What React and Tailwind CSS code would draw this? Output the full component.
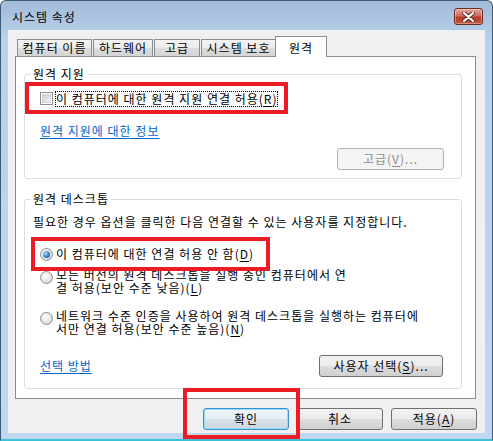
import React from 'react';

function Key({ children }) {
  return <span className="underline underline-offset-2">{children}</span>;
}

function Button({ children, width, disabled = false, focused = false }) {
  let tone =
    'border-[#707070] bg-[linear-gradient(to_bottom,#f2f2f2_0%,#ebebeb_48%,#dddddd_52%,#cfcfcf_100%)] text-black';
  if (disabled) tone = 'border-[#adb2b5] bg-[#f4f4f4] text-[#8d8d8d]';
  if (focused)
    tone =
      'border-[#3c8fd0] bg-[linear-gradient(to_bottom,#f1f6f9_0%,#e6eef3_48%,#d8e2e8_52%,#cdd7dd_100%)] text-black shadow-[inset_0_0_0_1px_#8fdcf6]';
  return (
    <button
      className={`flex h-[22px] items-center justify-center rounded-[3px] border text-[12px] leading-none ${tone}`}
      style={{ width }}
    >
      {children}
    </button>
  );
}

function Radio({ checked = false, offset = 'mt-[1px]' }) {
  return (
    <span
      className={`flex h-[13px] w-[13px] shrink-0 items-center justify-center rounded-full border border-[#8e8f8f] bg-[radial-gradient(circle_at_40%_35%,#ffffff,#dcdcdc_70%,#c6c6c6)] ${offset}`}
    >
      {checked && (
        <span className="h-[7px] w-[7px] rounded-full bg-[radial-gradient(circle_at_35%_35%,#9fdcff,#2a7cc0_60%,#1a4f8a)]" />
      )}
    </span>
  );
}

function Tab({ label, width, selected = false, first = false }) {
  if (selected) {
    return (
      <div
        className="relative z-10 -mb-[1px] -ml-[1px] flex h-[21px] items-start justify-center border border-b-0 border-[#898c95] bg-white pt-[2px] text-[12px]"
        style={{ width }}
      >
        {label}
      </div>
    );
  }
  return (
    <div
      className={`flex h-[17px] items-center justify-center border border-b-0 border-[#898c95] bg-[linear-gradient(to_bottom,#f3f3f3,#ebebeb_50%,#dddddd_51%,#d4d4d4)] text-[12px] ${first ? 'ml-[2px]' : 'ml-[1px]'}`}
      style={{ width }}
    >
      {label}
    </div>
  );
}

function GroupBox({ title, className, children }) {
  return (
    <div className={`relative ml-[8px] w-[438px] rounded-[3px] border border-[#d5dfe5] ${className}`}>
      <span className="absolute -top-[8px] left-[6px] bg-white px-[2px] text-[12px] leading-[14px]">
        {title}
      </span>
      {children}
    </div>
  );
}

export default function App() {
  return (
    <div className="relative flex h-[441px] w-[493px] flex-col overflow-hidden rounded-t-[6px] border border-b-2 border-[#3d5a78] border-b-[#3ac2d9] bg-[linear-gradient(to_bottom,#a2bcd9,#b9d2eb_40px,#bfd7ef)] font-['Noto_Sans_CJK_KR','Noto_Sans',sans-serif] tracking-[1px] text-black">
      {/* title bar */}
      <div className="flex h-[29px] shrink-0 items-center justify-between pl-[11px] pr-[9px] pt-[2px]">
        <span className="text-[12px]">시스템 속성</span>
        <div className="flex h-[17px] w-[29px] items-center justify-center rounded-[3px] border border-[#6d2d25] bg-[linear-gradient(to_bottom,#e2a79b,#cf6d5c_45%,#b83a28_55%,#c9553f)] shadow-[inset_0_0_0_1px_rgba(255,255,255,0.35)]">
          <svg width="13" height="10" viewBox="0 0 13 10">
            <path d="M2 1 L11 9 M11 1 L2 9" stroke="#5a2a24" strokeWidth="4" strokeLinecap="round" />
            <path d="M2 1 L11 9 M11 1 L2 9" stroke="#ffffff" strokeWidth="2.2" strokeLinecap="round" />
          </svg>
        </div>
      </div>

      {/* client area */}
      <div className="ml-[7px] flex h-[403px] w-[477px] flex-col bg-[#f0f0f0] pl-[7px] pt-[6px]">
        <div className="flex h-[20px] items-end">
          <Tab label="컴퓨터 이름" width={75} first />
          <Tab label="하드웨어" width={60} />
          <Tab label="고급" width={46} />
          <Tab label="시스템 보호" width={75} />
          <Tab label="원격" width={52} selected />
        </div>

        <div className="flex h-[343px] w-[461px] flex-col border border-[#898c95] bg-white">
          <GroupBox title="원격 지원" className="mt-[17px] h-[105px]">
            <div className="ml-[15px] mt-[16px] flex items-start">
              <span className="mt-[1px] flex h-[13px] w-[13px] items-center justify-center border border-[#8e8f8f] bg-white">
                <span className="h-[9px] w-[9px] border border-[#d0d4d8] bg-[linear-gradient(to_bottom_right,#c9cdd3,#f3f4f5)]" />
              </span>
              <span className="ml-[2px] border border-dotted border-black text-[12px] leading-[14px]">
                이 컴퓨터에 대한 원격 지원 연결 허용(<Key>R</Key>)
              </span>
            </div>
            <div className="ml-[15px] mt-[17px] text-[12px] leading-[14px] text-[#0066cc] underline underline-offset-2">
              원격 지원에 대한 정보
            </div>
            <div className="mr-[17px] mt-[10px] flex justify-end">
              <Button width={107} disabled>
                고급(<Key>V</Key>)...
              </Button>
            </div>
          </GroupBox>

          <GroupBox title="원격 데스크톱" className="mt-[20px] h-[190px]">
            <div className="ml-[8px] mt-[15px] text-[12px] leading-[14px]">
              필요한 경우 옵션을 클릭한 다음 연결할 수 있는 사용자를 지정합니다.
            </div>
            <div className="ml-[15px] mt-[18px] flex items-start gap-[3px] text-[12px] leading-[14px]">
              <Radio checked />
              <span>
                이 컴퓨터에 대한 연결 허용 안 함(<Key>D</Key>)
              </span>
            </div>
            <div className="ml-[15px] mt-[7px] flex items-start gap-[3px] text-[12px] leading-[13px]">
              <Radio offset="mt-[3px]" />
              <span>
                모든 버전의 원격 데스크톱을 실행 중인 컴퓨터에서 연
                <br />
                결 허용(보안 수준 낮음)(<Key>L</Key>)
              </span>
            </div>
            <div className="ml-[15px] mt-[15px] flex items-start gap-[3px] text-[12px] leading-[13px]">
              <Radio offset="mt-[3px]" />
              <span>
                네트워크 수준 인증을 사용하여 원격 데스크톱을 실행하는 컴퓨터에
                <br />
                서만 연결 허용(보안 수준 높음)(<Key>N</Key>)
              </span>
            </div>
            <div className="ml-[15px] mr-[18px] mt-[20px] flex items-center justify-between">
              <span className="text-[12px] leading-[14px] text-[#0066cc] underline underline-offset-2">
                선택 방법
              </span>
              <Button width={124}>
                사용자 선택(<Key>S</Key>)...
              </Button>
            </div>
          </GroupBox>
        </div>

        <div className="mr-[8px] mt-[9px] flex justify-end gap-[8px]">
          <Button width={86} focused>
            확인
          </Button>
          <Button width={86}>취소</Button>
          <Button width={86}>
            적용(<Key>A</Key>)
          </Button>
        </div>
      </div>

      {/* red annotation boxes */}
      <div className="pointer-events-none absolute left-[24px] top-[81px] h-[32px] w-[263px] border-4 border-[#ed1c24]" />
      <div className="pointer-events-none absolute left-[30px] top-[236px] h-[34px] w-[239px] border-4 border-[#ed1c24]" />
      <div className="pointer-events-none absolute left-[182px] top-[387px] h-[51px] w-[117px] border-4 border-[#ed1c24]" />
    </div>
  );
}
